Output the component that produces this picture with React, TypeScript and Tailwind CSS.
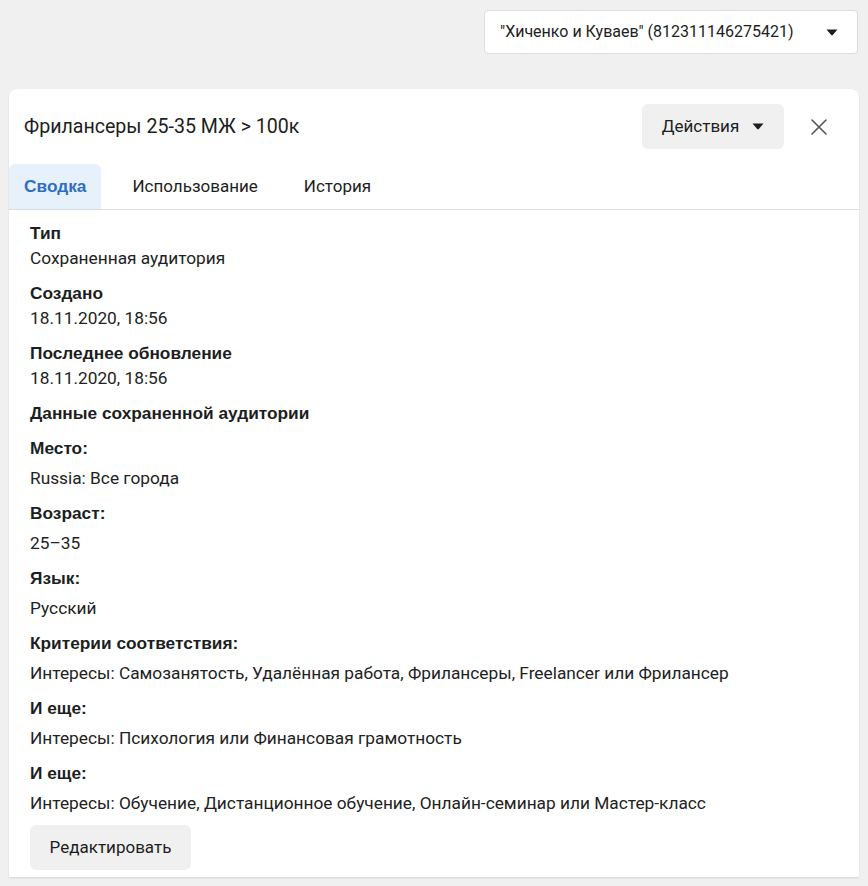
import React from "react";

const Caret = ({ className = "" }: { className?: string }) => (
  <svg width="12" height="7" viewBox="0 0 12 7" className={className}>
    <path d="M0.5 0.5 L11.5 0.5 L6.8 6 Q6 6.8 5.2 6 Z" fill="#1c1e21" />
  </svg>
);

const boldFont = { fontFamily: "'Liberation Sans', Arial, sans-serif" };

const Label = ({ children }: { children: React.ReactNode }) => (
  <div className="text-[17.3px] leading-[20px] font-bold text-[#1c1e21]" style={boldFont}>
    {children}
  </div>
);
const Value = ({ children, mt }: { children: React.ReactNode; mt: string }) => (
  <div className={`text-[17.3px] leading-[20px] text-[#222] ${mt}`}>{children}</div>
);

export default function App() {
  return (
    <div
      className="min-h-[886px] bg-[#f0f0f0] pt-[10px] pb-[9px]"
      style={{ fontFamily: "Roboto, 'Noto Sans', sans-serif" }}
    >
      <div className="flex justify-end pr-[10px]">
        <div className="w-[374px] h-[44px] bg-white border border-[#dcdcdc] rounded-[4px] flex items-center justify-between pl-[15px] pr-[19px]">
          <span className="text-[16px] text-[#1c1e21]">"Хиченко и Куваев" (812311146275421)</span>
          <Caret />
        </div>
      </div>

      <div className="mx-[9px] mt-[35px] bg-white rounded-t-[8px] shadow-[0_1px_2px_rgba(0,0,0,0.12)]">
        <div className="flex items-center justify-between pl-[15px] pr-[31px] pt-[15px] pb-[15px]">
          <div className="text-[19.6px] text-[#1c1e21]">Фрилансеры 25-35 МЖ &gt; 100к</div>
          <div className="flex items-center gap-[26px]">
            <button className="h-[45px] w-[142px] rounded-[6px] bg-[#f0f0f0] flex items-center justify-center gap-[13px] text-[17px] text-[#1c1e21]">
              <span>Действия</span>
              <Caret />
            </button>
            <svg width="18" height="18" viewBox="0 0 18 18">
              <path d="M2 2 L16 16 M16 2 L2 16" stroke="#555" strokeWidth="1.6" strokeLinecap="round" />
            </svg>
          </div>
        </div>

        <div className="flex border-b border-[#dadde1] gap-[16px]">
          <div
            className="h-[45px] px-[15px] flex items-center bg-[#e7f1fc] rounded-t-[6px] text-[17.3px] font-bold text-[#2f6ec2]"
            style={boldFont}
          >
            Сводка
          </div>
          <div className="h-[45px] px-[15px] flex items-center text-[17px] text-[#1c1e21]">Использование</div>
          <div className="h-[45px] px-[15px] flex items-center text-[17px] text-[#1c1e21]">История</div>
        </div>

        <div className="pl-[21px] pr-[20px] pt-[13px] pb-[7px] flex flex-col">
          <Label>Тип</Label>
          <Value mt="mt-[5px]">Сохраненная аудитория</Value>
          <div className="mt-[15px]"><Label>Создано</Label></div>
          <Value mt="mt-[5px]">18.11.2020, 18:56</Value>
          <div className="mt-[15px]"><Label>Последнее обновление</Label></div>
          <Value mt="mt-[5px]">18.11.2020, 18:56</Value>
          <div className="mt-[15px]"><Label>Данные сохраненной аудитории</Label></div>
          <div className="mt-[15px]"><Label>Место:</Label></div>
          <Value mt="mt-[10px]">Russia: Все города</Value>
          <div className="mt-[15px]"><Label>Возраст:</Label></div>
          <Value mt="mt-[10px]">25–35</Value>
          <div className="mt-[15px]"><Label>Язык:</Label></div>
          <Value mt="mt-[10px]">Русский</Value>
          <div className="mt-[15px]"><Label>Критерии соответствия:</Label></div>
          <Value mt="mt-[10px]">Интересы: Самозанятость, Удалённая работа, Фрилансеры, Freelancer или Фрилансер</Value>
          <div className="mt-[15px]"><Label>И еще:</Label></div>
          <Value mt="mt-[10px]">Интересы: Психология или Финансовая грамотность</Value>
          <div className="mt-[15px]"><Label>И еще:</Label></div>
          <Value mt="mt-[10px]">Интересы: Обучение, Дистанционное обучение, Онлайн-семинар или Мастер-класс</Value>
          <div className="mt-[12px]">
            <button className="h-[45px] w-[161px] rounded-[6px] bg-[#f0f0f0] text-[17px] text-[#1c1e21]">
              Редактировать
            </button>
          </div>
        </div>
      </div>
    </div>
  );
}
